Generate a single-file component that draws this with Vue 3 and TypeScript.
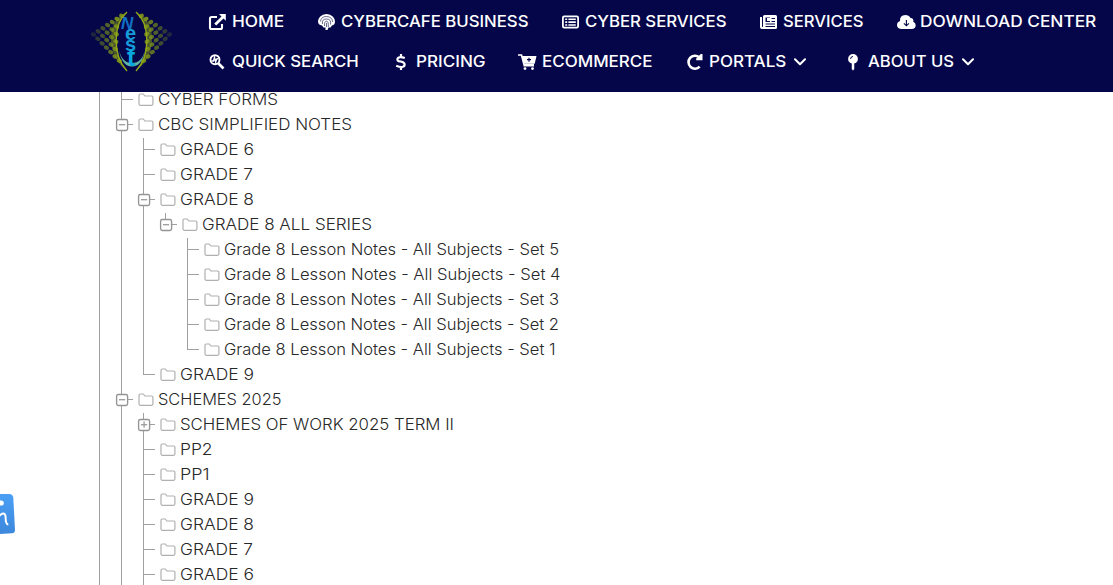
<script setup lang="ts">
interface NavItem {
  icon: string
  label: string
  slot: number
  width: number
  lead: number
  menu?: boolean
}

interface TreeRow {
  guides: string
  label: string
  width: number
  first?: boolean
}

interface Dot {
  x: number
  y: number
  o: number
}

const navRows: NavItem[][] = [
  [
    { icon: 'link', label: 'HOME', slot: 109, width: 52.3, lead: 23 },
    { icon: 'finger', label: 'CYBERCAFE BUSINESS', slot: 244, width: 187.5, lead: 23 },
    { icon: 'list', label: 'CYBER SERVICES', slot: 198, width: 141.5, lead: 23 },
    { icon: 'news', label: 'SERVICES', slot: 136.5, width: 80.5, lead: 23 },
    { icon: 'cloud', label: 'DOWNLOAD CENTER', slot: 210, width: 176.3, lead: 23.5 },
  ],
  [
    { icon: 'search', label: 'QUICK SEARCH', slot: 184, width: 126.7, lead: 23 },
    { icon: 'dollar', label: 'PRICING', slot: 124.5, width: 69.6, lead: 22.5 },
    { icon: 'cart', label: 'ECOMMERCE', slot: 168, width: 110.5, lead: 24 },
    { icon: 'redo', label: 'PORTALS', slot: 160.5, width: 77.3, lead: 23.3, menu: true },
    { icon: 'pin', label: 'ABOUT US', slot: 150, width: 86, lead: 22, menu: true },
  ],
]

// Guide codes: v = pass-through, t = branch, l = last branch,
// - = open branch, m = open last branch, + = closed branch
const rows: TreeRow[] = [
  { guides: 'vt', label: 'CYBER FORMS', width: 120 },
  { guides: 'v-', label: 'CBC SIMPLIFIED NOTES', width: 194 },
  { guides: 'vvt', label: 'GRADE 6', width: 74, first: true },
  { guides: 'vvt', label: 'GRADE 7', width: 73 },
  { guides: 'vv-', label: 'GRADE 8', width: 74 },
  { guides: 'vvvm', label: 'GRADE 8 ALL SERIES', width: 170, first: true },
  { guides: 'vvv t', label: 'Grade 8 Lesson Notes - All Subjects - Set 5', width: 335, first: true },
  { guides: 'vvv t', label: 'Grade 8 Lesson Notes - All Subjects - Set 4', width: 336.5 },
  { guides: 'vvv t', label: 'Grade 8 Lesson Notes - All Subjects - Set 3', width: 335 },
  { guides: 'vvv t', label: 'Grade 8 Lesson Notes - All Subjects - Set 2', width: 335 },
  { guides: 'vvv l', label: 'Grade 8 Lesson Notes - All Subjects - Set 1', width: 331.5 },
  { guides: 'vvl', label: 'GRADE 9', width: 74 },
  { guides: 'v-', label: 'SCHEMES 2025', width: 123.5 },
  { guides: 'vv+', label: 'SCHEMES OF WORK 2025 TERM II', width: 274, first: true },
  { guides: 'vvt', label: 'PP2', width: 32.5 },
  { guides: 'vvt', label: 'PP1', width: 29.5 },
  { guides: 'vvt', label: 'GRADE 9', width: 74 },
  { guides: 'vvt', label: 'GRADE 8', width: 74 },
  { guides: 'vvt', label: 'GRADE 7', width: 73 },
  { guides: 'vvt', label: 'GRADE 6', width: 74 },
]

function verticalLine(code: string, first: boolean): string {
  if (code === ' ') return ''
  const top = first && code !== 'v' ? 1 : 0
  const end = code === 'l' || code === 'm' ? 13 : 25
  return `M.5 ${top}V${end}`
}

// Widens the letters so that a label takes up its set width
const vFit = {
  mounted(el: HTMLElement, binding: { value: number }) {
    const natural = el.getBoundingClientRect().width
    el.style.transform = `scaleX(${binding.value / natural})`
    el.style.marginRight = `${binding.value - natural}px`
  },
}

const dots: Dot[] = []
for (let i = 0; i < 10; i++) {
  for (let j = 0; j < 10; j++) {
    const x = 2.5 + i * 4.7 + j * 4.3
    const y = 23.5 - i * 3.1 + j * 4.4
    const rim = 37 - 10.5 * Math.sqrt(Math.max(0, 1 - ((y - 30) / 29) ** 2))
    if (x < rim && y > 1 && y < 60) dots.push({ x, y, o: Math.min(0.9, 0.15 + x / 34) })
  }
}
</script>

<template>
  <div class="page">
    <header class="header">
      <svg class="logo" width="82" height="62" viewBox="0 0 82 62">
        <defs>
          <g id="net">
            <g fill="#7f9618">
              <ellipse v-for="(d, k) in dots" :key="k" :cx="d.x" :cy="d.y" rx="2.700" ry="2.100" :opacity="d.o" :transform="`rotate(25 ${d.x} ${d.y})`" />
            </g>
            <path d="M36 1Q19 9 20 30Q21 48 36 60Q25 44 24.500 30Q24.500 13 36 1Z" fill="#7f9618" opacity=".55" />
            <path d="M36 1C22 13 21 44 36 60" fill="none" stroke="#93a91a" stroke-width="1.400" />
          </g>
        </defs>
        <use href="#net" />
        <use href="#net" transform="translate(81 0) scale(-1 1)" />
        <path d="M28 39Q31 55.500 41 55.500T54 39Q51 52 41 52T28 39" fill="#61b5a0" />
        <text font-family="Liberation Sans, sans-serif" font-weight="bold">
          <tspan x="30" y="18" font-size="17" font-style="italic" fill="#126fc4">N</tspan>
          <tspan x="34" y="28.500" font-size="20" fill="#169bd8">e</tspan>
          <tspan x="34" y="40" font-size="20" fill="#159bd9">s</tspan>
          <tspan x="36" y="55" font-size="25" fill="#08a8df">t</tspan>
        </text>
      </svg>
      <nav class="nav">
        <div v-for="(line, r) in navRows" :key="r" class="nav-row">
          <a v-for="item in line" :key="item.label" class="nav-item" :style="{ width: item.slot + 'px' }">
            <span class="nav-icon" :style="{ width: item.lead + 'px' }">
              <svg width="20" height="18" viewBox="0 0 20 18" fill="#fff">
                <g v-if="item.icon === 'link'">
                  <path d="M8 4H2.600Q1 4 1 5.600V14.400Q1 16 2.600 16H11.400Q13 16 13 14.400V11" fill="none" stroke="#fff" stroke-width="2.100" />
                  <path d="M10 1H16.800V7.800L14.500 5.500L7.200 12.500L5.300 10.600L12.500 3.500Z" />
                </g>
                <g v-else-if="item.icon === 'finger'">
                  <path d="M0 8.500Q0 6 2 3.800Q4.500 1 8.500 1T15 3.800Q17 6 17 8.500Q17 12 14 12.500L12.500 14.500H10.500L9.500 17H7.500V14.500H5.500L4 12.500Q0 12 0 8.500Z" />
                  <path d="M2.500 8.500Q3 3.500 8.500 3.500T14.700 9M4.500 11Q3.500 6 8.500 6T12.500 11.500M6.500 13Q6.300 8.200 8.500 8.200T10.300 14M8.500 10V14" fill="none" stroke="#05064a" stroke-width=".6" />
                </g>
                <g v-else-if="item.icon === 'list'">
                  <rect x=".9" y="3.400" width="15.200" height="11.200" rx="1.300" fill="none" stroke="#fff" stroke-width="1.800" />
                  <path d="M3.200 5.400H5.200V7H3.200ZM3.200 8.300H5.200V9.900H3.200ZM3.200 11.200H5.200V12.800H3.200ZM6.400 5.400H13.800V7H6.400ZM6.400 8.300H13.800V9.900H6.400ZM6.400 11.200H13.800V12.800H6.400Z" />
                </g>
                <g v-else-if="item.icon === 'news'">
                  <path fill-rule="evenodd" d="M4.500 2H15.500Q17 2 17 3.500V14.500Q17 16 15.500 16H2Q0 16 0 14V4H2V13.500Q2.500 14.500 3 13.500V3.500Q3 2 4.500 2ZM5.500 4.500V9H10V4.500ZM11.500 5V6H15V5ZM11.500 8V9H15V8ZM5.500 10.500V11.500H15V10.500ZM5.500 13V14H15V13Z" />
                  <path d="M7 5H10V8H7Z" />
                </g>
                <g v-else-if="item.icon === 'cloud'">
                  <path d="M4 16Q0 15.500 0 12Q0 9 3 8Q2.700 2.200 8.300 2Q12 2 13.500 5Q17 5.300 16.300 8.700Q18.700 9.800 18.700 12.200Q18.500 16 14.800 16Z" />
                  <path d="M9.400 7V12.500M6.900 10.300L9.400 12.800L11.900 10.300" fill="none" stroke="#05064a" stroke-width="1.100" />
                </g>
                <g v-else-if="item.icon === 'search'">
                  <circle cx="6" cy="6.700" r="4.500" fill="none" stroke="#fff" stroke-width="1.900" />
                  <path d="M9 10L14.500 15.500" stroke="#fff" stroke-width="2.600" />
                  <path d="M2.500 8H4.500L5.500 4.500L6.700 9L7.600 6L9.500 5.500" fill="none" stroke="#fff" stroke-width="1.400" />
                </g>
                <g v-else-if="item.icon === 'dollar'" fill="none" stroke="#fff" stroke-width="2.200">
                  <path d="M11.800 5Q7.300 3.300 5.200 4.800Q3.500 6.700 5.500 8.200Q10.500 8.900 11.400 10.500Q12.200 13 9.800 13.800Q7.500 14.500 3.200 12.700M8 1V4M8 14V17" />
                </g>
                <g v-else-if="item.icon === 'cart'">
                  <path d="M0 2H3.500L6 11.500H16" fill="none" stroke="#fff" stroke-width="1.700" />
                  <path d="M4 3H18.500L16.700 10.700H5.700Z" />
                  <path d="M5.500 12H16V13.500H5.500Z" />
                  <circle cx="7" cy="15.600" r="1.400" /><circle cx="14.500" cy="15.600" r="1.400" />
                  <path d="M11 4.700V8.700M9 6.700H13" stroke="#05064a" stroke-width="1.200" />
                </g>
                <g v-else-if="item.icon === 'redo'">
                  <path d="M13.200 4.200A6.500 6.500 0 1 0 13.700 13.700" fill="none" stroke="#fff" stroke-width="2.600" />
                  <path d="M16.500 1V7.200H10.200V5.500L14.800 1Z" />
                </g>
                <g v-else>
                  <circle cx="7" cy="5.900" r="4.900" />
                  <path d="M6 10H8V16L7 17.300L6 16Z" stroke="#fff" stroke-width=".5" />
                  <path d="M4.600 6Q4.500 3.600 7 3.500" fill="none" stroke="#05064a" />
                </g>
              </svg>
            </span>
            <span v-fit="item.width" class="nav-label">{{ item.label }}</span>
            <svg v-if="item.menu" class="chevron" width="12" height="8" viewBox="0 0 12 8">
              <path d="M1 1.300L6 6.300L11 1.300" fill="none" stroke="#fff" stroke-width="2" stroke-linecap="round" stroke-linejoin="round" />
            </svg>
          </a>
        </div>
      </nav>
    </header>

    <main class="tree">
      <div v-for="(row, n) in rows" :key="n" class="tree-row">
        <svg v-for="(code, c) in row.guides.split('')" :key="c" class="guide" width="22" height="25" viewBox="0 0 22 25">
          <g fill="none" stroke="#a0a0a0">
            <path :d="verticalLine(code, !!row.first)" />
            <path v-if="code !== 'v' && code !== ' '" d="M0 12.500H12" />
            <template v-if="'-m+'.includes(code)">
              <rect x="-4.400" y="7.500" width="11" height="11" rx="1.800" fill="#fff" stroke="#949494" stroke-width="1.350" />
              <path d="M-2 12.700H4.200" stroke-width="1.350" />
              <path v-if="code === '+'" d="M1.100 9.600V15.800" stroke-width="1.350" />
            </template>
          </g>
        </svg>
        <svg class="folder" width="16" height="14" viewBox="0 0 16 14">
          <path d="M1 2.200Q1 1 2.200 1H5.300L6.900 3H13.700Q14.900 3 14.900 4.200V11.100Q14.900 12.300 13.700 12.300H2.200Q1 12.300 1 11.100Z" fill="none" stroke="#b0b0b0" stroke-width="1.200" />
        </svg>
        <span v-fit="row.width" class="tree-label">{{ row.label }}</span>
      </div>
    </main>

    <div class="side-tab">
      <svg width="15" height="40" viewBox="0 0 15 40">
        <defs>
          <linearGradient id="tab" x1="0" y1="0" x2="0" y2="1">
            <stop offset="0" stop-color="#4aa0f5" />
            <stop offset="1" stop-color="#3d87dc" />
          </linearGradient>
        </defs>
        <path d="M0 0H9Q13 0 13.300 4L15 36Q15 39 12 39.300L0 40Z" fill="url(#tab)" />
        <circle cx="1.200" cy="9" r="2.600" fill="#fff" />
        <path d="M-1 22Q5 16.500 5.600 23Q5.600 30.500 8.300 30.500" fill="none" stroke="#fff" stroke-width="2" />
      </svg>
    </div>
  </div>
</template>

<style>
body {
  margin: 0;
  overflow: hidden;
}
</style>

<style scoped>
.page {
  position: relative;
  height: 585px;
  overflow: hidden;
  background: #fff;
  font-family: Inter, "Open Sans", sans-serif;
}

.header {
  position: relative;
  z-index: 1;
  box-sizing: border-box;
  display: flex;
  height: 92px;
  background: #05064a;
}

.logo {
  flex: none;
  margin: 11px 36px 0 91px;
}

.nav {
  padding-top: 2px;
}

.nav-row {
  display: flex;
  height: 40px;
}

.nav-item {
  display: flex;
  flex: none;
  align-items: center;
  color: #fff;
  font-size: 15.400px;
  font-weight: 500;
  line-height: 40px;
  white-space: nowrap;
}

.nav-icon {
  display: block;
  flex: none;
  height: 18px;
  line-height: 0;
}

.nav-icon svg {
  display: block;
  overflow: visible;
}

.nav-label,
.tree-label {
  display: block;
  flex: none;
  transform-origin: left center;
}

.chevron {
  flex: none;
  margin-left: 8px;
}

.tree {
  margin-top: -5px;
  padding-left: 99px;
}

.tree-row {
  display: flex;
  align-items: center;
  height: 25px;
  color: #282828;
  font-size: 15.400px;
  font-weight: 300;
  line-height: 25px;
  white-space: nowrap;
}

.guide {
  flex: none;
  overflow: visible;
}

.folder {
  flex: none;
  margin: 0 3.500px 0 -5px;
}

.side-tab {
  position: absolute;
  left: 0;
  top: 494px;
  line-height: 0;
}
</style>
